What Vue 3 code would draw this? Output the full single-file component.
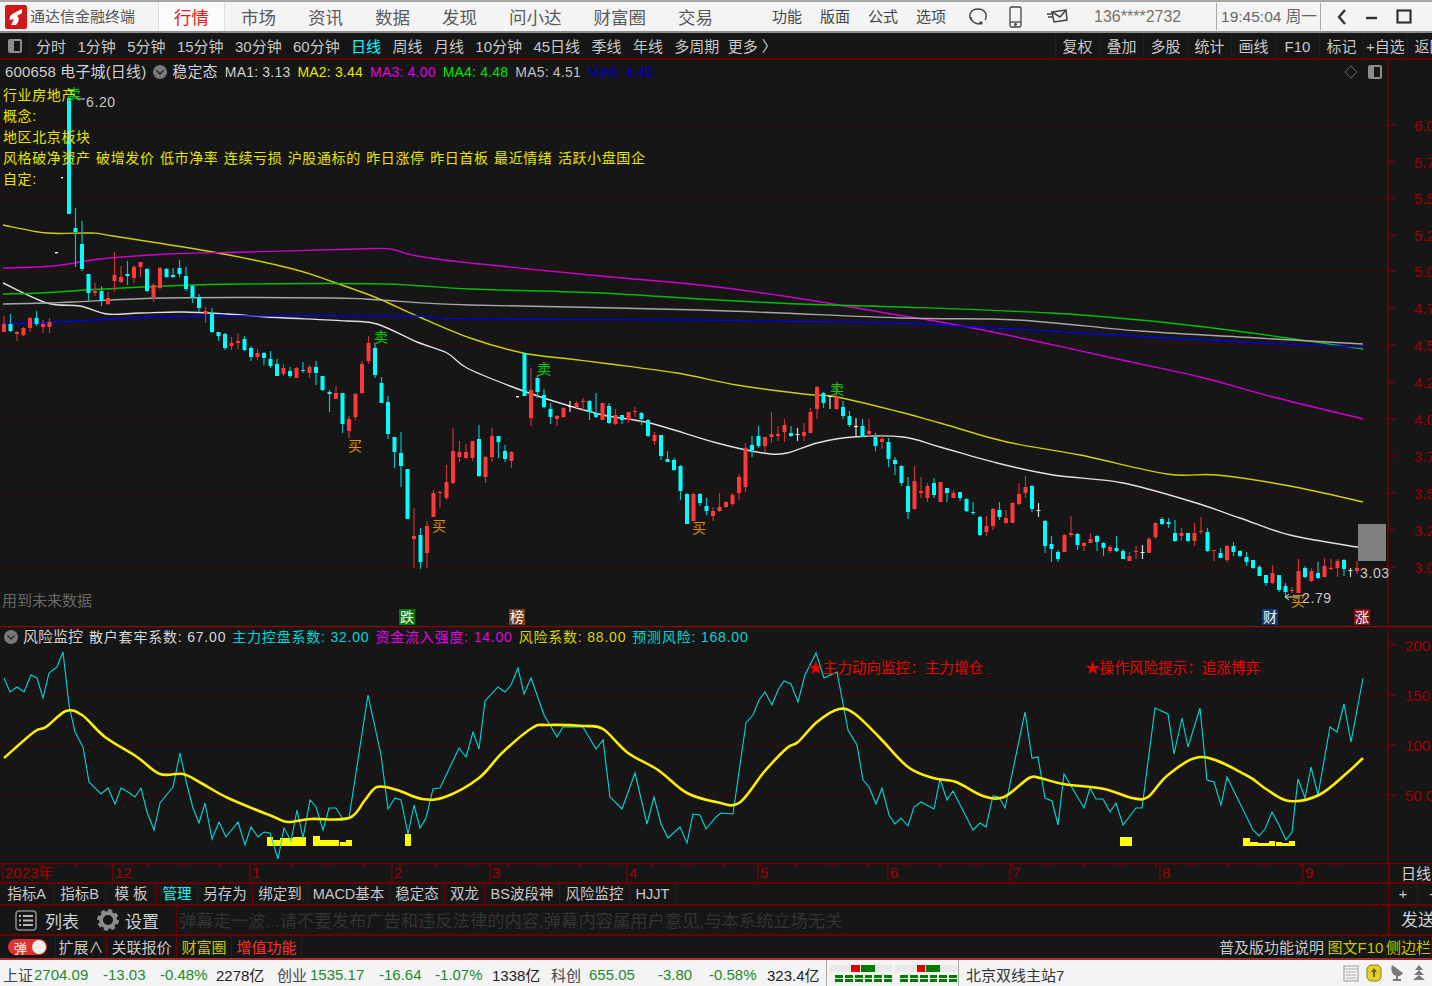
<template>
  <div class="app">
    <!-- 顶部标题栏 -->
    <header class="titlebar">
      <svg class="logo" width="22" height="24" viewBox="0 0 22 24">
        <rect x="0" y="0" width="22" height="24" rx="2" fill="#d01818" />
        <path d="M17 4 L9 8 C5 10 4 13 5 15 L9 14 L6 20 L11 20 C14 17 15 13 12 11 L17 8 Z" fill="#fff" />
      </svg>
      <span class="app-name">通达信金融终端</span>
      <nav class="topnav">
        <a v-for="item in topNav" :key="item" class="topnav-item" :class="{ active: item === '行情' }">{{ item }}</a>
      </nav>
      <div class="topmenu">
        <span v-for="item in topMenu" :key="item">{{ item }}</span>
      </div>
      <svg class="ticon headset" width="20" height="22" viewBox="0 0 20 22" fill="none" stroke="#444" stroke-width="1.4">
        <path d="M3 14 C0 9 3 3 10 3 C17 3 20 9 17 14" />
        <path d="M3 11 C3 15 6 17 10 18 L13 17" />
        <circle cx="13" cy="17" r="1" fill="#444" />
      </svg>
      <svg class="ticon phone" width="13" height="22" viewBox="0 0 13 22" fill="none" stroke="#444" stroke-width="1.3">
        <rect x="1" y="1" width="11" height="20" rx="1.5" />
        <path d="M1 16 H12" />
        <circle cx="6.5" cy="18.5" r=".8" fill="#444" />
      </svg>
      <svg class="ticon mail" width="21" height="15" viewBox="0 0 21 15" fill="none" stroke="#444" stroke-width="1.5">
        <path d="M5 3 L19 1 L20 11 L7 13 Z" />
        <path d="M5 3 L13 8 L19 1" />
        <path d="M0 5 H5 M1 8 H6" />
      </svg>
      <span class="account">136****2732</span>
      <i class="tsep"></i>
      <span class="clock">19:45:04 周一</span>
      <i class="tsep"></i>
      <svg class="wbtn back" width="12" height="18" viewBox="0 0 12 18" fill="none" stroke="#333" stroke-width="2.4"><path d="M9 2 L3 9 L9 16" /></svg>
      <svg class="wbtn min" width="12" height="18" viewBox="0 0 12 18" fill="none" stroke="#333" stroke-width="2.4"><path d="M0 10 H11" /></svg>
      <svg class="wbtn max" width="16" height="16" viewBox="0 0 16 16" fill="none" stroke="#333" stroke-width="2.2"><rect x="1.5" y="1.5" width="13" height="12" /></svg>
    </header>

    <!-- 周期工具栏 -->
    <div class="toolbar">
      <div class="tool-icon"><i class="panel-icon"></i></div>
      <div class="periods">
        <span v-for="p in periods" :key="p" :class="{ on: p === '日线' }">{{ p }}</span>
        <span class="more">更多 〉</span>
      </div>
      <div class="tools">
        <span v-for="t in tools" :key="t">{{ t }}</span>
      </div>
    </div>

    <!-- K线主图 -->
    <section class="main-chart">
      <svg class="chart-svg" width="1432" height="566" viewBox="0 60 1432 566">
        <line v-for="y in mainGrid" :key="y" x1="0" x2="1388" :y1="y" :y2="y" class="grid" />
        <path v-for="m in maLines" :key="m.color" :d="smooth(m.points)" :stroke="m.color" fill="none" stroke-width="1.4" />
        <g v-for="c in candleList" :key="c.x">
          <line :x1="c.x" :x2="c.x" :y1="c.hi" :y2="c.lo" :stroke="c.wick" stroke-width="1.2" />
          <rect v-if="c.h" :x="c.x - 2" :y="c.top" width="4" :height="c.h" :fill="c.color" />
        </g>
        <rect x="55" y="252" width="3" height="1.4" fill="#eee" />
        <rect x="61" y="177" width="2" height="1.4" fill="#eee" />
        <rect x="516" y="396" width="3" height="1.4" fill="#eee" />
        <rect x="1358" y="524" width="28" height="37" fill="#808080" />
        <line x1="1388" x2="1388" y1="60" y2="626" class="axis" />
        <g v-for="t in mainTicks" :key="t.label">
          <line x1="1388" x2="1396" :y1="t.y" :y2="t.y" class="axis" />
          <text x="1414" :y="t.y + 6" class="axis-text">{{ t.label }}</text>
        </g>
        <path d="M73 95 L79 99 L85 99" stroke="#ddd" fill="none" />
        <text x="86" y="107" class="price">6.20</text>
        <path d="M1300 597 H1285 L1289 594 M1285 597 L1289 600" stroke="#ddd" fill="none" />
        <text x="1302" y="603" class="price">2.79</text>
        <text x="1360" y="578" class="price">3.03</text>
        <text v-for="s in signals" :key="s.x" :x="s.x" :y="s.y" class="signal" :fill="s.color">{{ s.text }}</text>
        <text x="2" y="606" class="future">用到未来数据</text>
        <g v-for="b in badges" :key="b.text">
          <rect :x="b.x" y="609" width="16" height="16" :fill="b.color" />
          <text :x="b.x + 1" y="622" class="badge-text">{{ b.text }}</text>
        </g>
      </svg>
      <div class="legend">
        <span class="stock">600658 电子城(日线)</span>
        <svg class="fold" width="14" height="14" viewBox="0 0 14 14">
          <circle cx="7" cy="7" r="7" fill="#7a7a7a" />
          <path d="M3.5 5.5 L7 9 L10.5 5.5" fill="none" stroke="#262626" stroke-width="1.4" />
        </svg>
        <span class="stock ind">稳定态</span>
        <span v-for="m in maLegend" :key="m.text" :style="{ color: m.color }">{{ m.text }}</span>
      </div>
      <div class="tags">
        <div>行业房地产</div>
        <div>概念:</div>
        <div>地区北京板块</div>
        <div class="wide">风格破净资产 破增发价 低市净率 连续亏损 沪股通标的 昨日涨停 昨日首板 最近情绪 活跃小盘国企</div>
        <div>自定:</div>
      </div>
      <div class="corner">
        <svg width="14" height="14" viewBox="0 0 14 14" fill="none" stroke="#666"><path d="M7 1 L13 7 L7 13 L1 7 Z" /></svg>
        <i class="panel-icon small"></i>
      </div>
    </section>

    <!-- 副图 风险监控 -->
    <section class="sub-chart">
      <svg class="chart-svg" width="1432" height="237" viewBox="0 626 1432 237">
        <line x1="0" x2="1432" y1="626.5" y2="626.5" class="axis bright" />
        <line v-for="t in subGrid" :key="t" x1="0" x2="1388" :y1="t" :y2="t" class="grid" />
        <rect v-for="(b, i) in riskBars" :key="i" :x="b[0]" :y="b[2]" :width="b[1] - b[0]" :height="846 - b[2]" fill="#ffff00" />
        <polyline :points="riskLine" fill="none" stroke="#00d8d8" stroke-width="1.1" />
        <path :d="smooth(riskAvg)" fill="none" stroke="#ffee00" stroke-width="2.6" />
        <text x="808" y="673" class="red-note">★主力动向监控：主力增仓</text>
        <text x="1085" y="673" class="red-note">★操作风险提示：追涨博弈</text>
        <line x1="1388" x2="1388" y1="626" y2="863" class="axis" />
        <g v-for="t in subTicks" :key="t.label">
          <line x1="1388" x2="1396" :y1="t.y" :y2="t.y" class="axis" />
          <text x="1405" :y="t.y + 6" class="axis-text">{{ t.label }}</text>
        </g>
      </svg>
      <div class="legend sub">
        <svg class="fold" width="14" height="14" viewBox="0 0 14 14">
          <circle cx="7" cy="7" r="7" fill="#7a7a7a" />
          <path d="M3.5 5.5 L7 9 L10.5 5.5" fill="none" stroke="#262626" stroke-width="1.4" />
        </svg>
        <span class="stock name">风险监控</span>
        <span v-for="m in riskLegend" :key="m.text" :style="{ color: m.color }">{{ m.text }}</span>
      </div>
    </section>

    <!-- 时间轴 -->
    <div class="date-axis">
      <svg class="chart-svg" width="1388" height="19" viewBox="0 863 1388 19">
        <line x1="0" x2="1388" y1="863.5" y2="863.5" class="axis" />
        <line v-for="x in dateTicks" :key="x" :x1="x" :x2="x" y1="863" y2="867" class="axis" />
        <g v-for="d in dates" :key="d.label">
          <line :x1="d.x" :x2="d.x" y1="863" y2="882" class="axis" />
          <text :x="d.x + 2" y="878" class="date-text">{{ d.label }}</text>
        </g>
      </svg>
      <div class="date-unit">日线</div>
    </div>

    <!-- 指标标签 -->
    <div class="tabs">
      <span v-for="t in tabs" :key="t.text" :class="{ on: t.text === '管理' }" :style="{ width: t.w + 'px' }">{{ t.text }}</span>
      <i class="fill"></i>
      <span class="pm">+</span>
      <span class="pm last">-</span>
    </div>

    <!-- 弹幕输入 -->
    <div class="danmu">
      <div class="danmu-tools">
        <svg width="22" height="21" viewBox="0 0 22 21">
          <rect x="1" y="1" width="20" height="19" rx="3" fill="none" stroke="#8a8a8a" stroke-width="1.6" />
          <path d="M4 6 H6 M8 6 H18 M4 10.5 H6 M8 10.5 H18 M4 15 H6 M8 15 H18" stroke="#b8b8b8" stroke-width="2" />
        </svg>
        <span class="list-label">列表</span>
        <svg class="gear" width="22" height="22" viewBox="0 0 22 22">
          <circle cx="11" cy="11" r="7" fill="none" stroke="#8c8c8c" stroke-width="4" />
          <circle cx="11" cy="11" r="9.2" fill="none" stroke="#8c8c8c" stroke-width="3.4" stroke-dasharray="4 3.2" />
        </svg>
        <span>设置</span>
      </div>
      <div class="danmu-input">弹幕走一波...请不要发布广告和违反法律的内容,弹幕内容属用户意见,与本系统立场无关</div>
      <div class="send">发送</div>
    </div>

    <!-- 功能条 -->
    <div class="strip">
      <div class="toggle-cell">
        <div class="toggle"><b>弹</b><i></i></div>
      </div>
      <span class="w51">扩展∧</span>
      <span class="w70">关联报价</span>
      <span class="w55 yellow">财富圈</span>
      <span class="w70 red">增值功能</span>
      <i class="fill"></i>
      <span class="w109">普及版功能说明</span>
      <span class="w60 yellow">图文F10</span>
      <span class="w46 yellow">侧边栏</span>
    </div>

    <!-- 状态栏 -->
    <footer class="statusbar">
      <template v-for="g in indices" :key="g.name">
        <span class="idx-name" :style="{ width: g.nameW + 'px' }">{{ g.name }}</span>
        <span v-for="v in g.vals" :key="v.t" :class="v.c" :style="{ width: v.w + 'px' }">{{ v.t }}</span>
      </template>
      <i class="ssep"></i>
      <div v-for="(m, i) in meters" :key="i" class="meter">
        <div class="meter-top">
          <i v-for="(s, j) in m" :key="j" :class="s.c" :style="{ width: s.w + 'px' }"></i>
        </div>
        <div class="meter-dash">
          <i v-for="n in 12" :key="n"></i>
        </div>
      </div>
      <i class="ssep"></i>
      <span class="station">北京双线主站7</span>
      <div class="status-icons">
        <svg width="16" height="17" viewBox="0 0 16 17">
          <rect x="1" y="1" width="14" height="15" fill="#f4f4f4" stroke="#999" />
          <path d="M1 4 H15 M3 7 H13 M3 10 H13 M3 13 H13" stroke="#aaa" />
        </svg>
        <svg width="16" height="18" viewBox="0 0 16 18">
          <path d="M4 1 H12 L15 4 V14 L12 17 H4 L1 14 V4 Z" fill="#e4d020" stroke="#8c8030" />
          <path d="M8 4 L11 8 H9 V13 H7 V8 H5 Z" fill="#6c6420" />
        </svg>
        <svg width="16" height="18" viewBox="0 0 16 18">
          <path d="M3 1 L14 9 C12 13 7 13 4 10 C2 7 2 4 3 1 Z" fill="#777" />
          <path d="M8 11 V15 M4 16 H12" stroke="#777" stroke-width="2" />
        </svg>
        <svg width="14" height="18" viewBox="0 0 14 18" fill="#777">
          <path d="M7 1 L11 6 H3 Z M7 6 L12 11 H2 Z M7 11 L13 16 H1 Z" />
        </svg>
      </div>
    </footer>
  </div>
</template>

<script setup>
import { computed } from "vue";

const topNav = ["行情", "市场", "资讯", "数据", "发现", "问小达", "财富圈", "交易"];
const topMenu = ["功能", "版面", "公式", "选项"];
const periods = ["分时", "1分钟", "5分钟", "15分钟", "30分钟", "60分钟", "日线", "周线", "月线", "10分钟", "45日线", "季线", "年线", "多周期"];
const tools = ["复权", "叠加", "多股", "统计", "画线", "F10", "标记", "+自选", "返回"];

const mainGrid = [125, 198, 271, 345, 419, 493, 567];
const mainTicks = [
  { y: 125, label: "6.00" }, { y: 162, label: "5.75" }, { y: 198, label: "5.50" }, { y: 235, label: "5.25" },
  { y: 271, label: "5.00" }, { y: 308, label: "4.75" }, { y: 345, label: "4.50" }, { y: 382, label: "4.25" },
  { y: 419, label: "4.00" }, { y: 456, label: "3.75" }, { y: 493, label: "3.50" }, { y: 530, label: "3.25" },
  { y: 567, label: "3.00" },
];

const maLegend = [
  { text: "MA1: 3.13", color: "#d0d0d0" },
  { text: "MA2: 3.44", color: "#e6e600" },
  { text: "MA3: 4.00", color: "#e600e6" },
  { text: "MA4: 4.48", color: "#00e600" },
  { text: "MA5: 4.51", color: "#c0c0c0" },
  { text: "MA6: 4.49", color: "#0000c8" },
];

const maLines = [
  { color: "#e0e0e0", points: "3,283 47,303 80,306 107,314 140,313 183,312 227,314 267,317 347,321 377,324 417,342 447,353 467,368 510,386 550,400 603,415 650,423 717,443 763,453 787,453 817,443 853,437 903,437 940,447 997,463 1053,475 1123,483 1193,502 1240,518 1290,535 1363,548" },
  { color: "#d0d000", points: "3,225 47,233 92,233 113,236 213,252 293,269 333,282 377,298 417,316 470,338 523,353 570,359 610,364 677,373 737,385 803,394 837,397 900,412 940,423 1007,442 1080,455 1167,474 1217,475 1290,486 1363,502" },
  { color: "#d000d0", points: "3,268 53,266 100,259 167,254 248,252 358,249 390,249 417,256 470,263 600,276 700,285 790,297 880,312 957,325 1040,342 1117,359 1200,377 1273,397 1363,419" },
  { color: "#00c000", points: "3,294 40,293 87,290 167,286 240,284 383,284 470,289 600,293 700,299 800,304 900,307 1050,313 1140,320 1213,328 1287,338 1363,349" },
  { color: "#a8a8a8", points: "3,304 47,303 73,302 167,298 333,298 380,300 470,305 700,310 900,318 1017,320 1140,331 1257,338 1363,344" },
  { color: "#0000e0", points: "3,324 60,322 133,318 213,316 413,316 470,319 697,320 847,322 940,325 1100,334 1257,343 1363,347" },
];

// 把折点串转成平滑曲线
function smooth(points) {
  const p = points.split(" ").map((s) => s.split(",").map(Number));
  let d = `M${p[0][0]} ${p[0][1]}`;
  for (let i = 0; i < p.length - 1; i++) {
    const a = p[i - 1] || p[i];
    const b = p[i];
    const c = p[i + 1];
    const e = p[i + 2] || c;
    const c1x = b[0] + (c[0] - a[0]) / 6;
    const c1y = b[1] + (c[1] - a[1]) / 6;
    const c2x = c[0] - (e[0] - b[0]) / 6;
    const c2y = c[1] - (e[1] - b[1]) / 6;
    d += ` C${c1x.toFixed(1)} ${c1y.toFixed(1)} ${c2x.toFixed(1)} ${c2y.toFixed(1)} ${c[0]} ${c[1]}`;
  }
  return d;
}

// 每根K线：类型、最高、实体上沿、实体下沿、最低（像素坐标）
const rawCandles = [
  ["r",316,324,332,332],["c",314,324,331,332],["r",331,332,334,341],["r",327,328,335,336],["r",317,318,328,332],
  ["c",311,318,324,326],["r",320,324,327,333],["r",318,322,327,333],null,null,
  ["c",96,98,214,214],["c",208,228,232,267],["c",221,244,269,271],["c",274,274,293,301],["r",283,291,293,296],
  ["c",286,291,301,306],["r",292,298,304,305],["r",252,275,281,292],["r",266,277,282,283],["c",261,274,276,285],
  ["r",265,267,278,283],["r",262,262,267,277],["c",268,269,291,292],["r",283,285,297,302],["r",267,268,288,289],
  ["c",268,269,277,278],["c",268,275,277,278],["c",260,268,274,277],["c",267,276,289,291],["c",285,286,297,303],
  ["c",294,297,308,312],["r",307,311,314,323],["c",308,313,332,333],["c",332,332,336,341],["c",333,334,348,350],
  ["r",337,343,346,350],["r",333,341,343,349],["c",336,339,350,351],["c",346,348,357,361],["r",349,353,357,360],
  ["c",352,353,358,365],["c",351,359,366,368],["c",359,364,376,376],["r",364,368,374,376],["c",367,371,376,378],
  ["r",367,368,378,378],["c",362,370,371,373],["r",365,367,373,378],["c",361,367,373,385],["c",376,376,390,391],
  ["c",390,392,394,412],["r",386,393,399,399],["c",393,393,424,433],["r",416,419,431,438],["r",393,394,417,420],
  ["r",361,364,393,394],["r",336,343,361,364],["c",343,348,375,378],["c",377,383,403,403],["c",396,402,434,439],
  ["c",437,437,452,468],["c",432,453,466,487],["c",469,469,519,519],["r",508,536,539,568],["c",528,535,562,569],
  ["r",521,526,553,568],["r",490,493,517,517],["r",491,492,493,508],["r",465,482,498,500],["r",428,451,483,484],
  ["r",441,452,457,462],["r",444,452,458,459],["r",441,441,458,461],["c",425,439,476,477],["r",456,457,477,483],
  ["r",428,436,457,462],["c",436,436,442,458],["c",445,451,459,462],["r",451,452,461,468],null,
  ["c",353,353,396,396],["r",368,390,418,426],["c",375,378,392,398],["c",389,395,407,408],["c",403,409,417,424],
  ["r",415,416,419,426],["r",407,408,417,418],["w",401,406,407,412],["r",401,403,407,408],["r",398,401,402,410],
  ["c",400,401,412,420],["c",393,413,417,418],["r",403,403,420,420],["c",403,406,423,424],["r",409,415,424,425],
  ["c",415,415,420,424],["r",412,412,420,423],["r",407,411,412,417],["c",412,413,419,425],["c",419,420,436,437],
  ["r",432,435,441,445],["c",435,435,456,460],["c",451,459,462,462],["c",458,460,470,471],["c",465,466,491,500],
  ["c",493,494,524,524],["r",493,494,521,521],["c",493,494,503,506],["c",498,506,511,515],["r",507,511,516,521],
  ["r",493,507,511,512],["r",501,502,507,508],["r",493,495,504,506],["r",474,477,493,500],["r",443,448,487,492],
  ["c",436,445,450,457],["c",426,436,446,448],["r",437,437,446,452],["r",412,434,437,443],["r",426,434,436,441],
  ["r",419,425,432,442],["c",426,433,436,437],["w",428,434,435,441],["r",423,432,436,441],["r",408,412,433,433],
  ["r",386,387,409,419],["c",392,393,403,408],["w",395,396,396,409],["r",387,397,409,410],["c",401,407,416,419],
  ["c",411,416,425,427],["w",418,426,427,437],["c",419,426,437,437],["r",419,431,434,437],["c",433,437,446,451],
  ["r",434,439,442,449],["c",438,442,459,467],["c",457,460,464,475],["c",465,466,483,486],["c",477,486,512,519],
  ["r",466,481,509,510],["r",477,491,493,498],["r",483,486,498,502],["c",478,483,495,498],["r",482,482,502,502],
  ["c",488,488,493,502],["r",490,493,498,498],["c",492,492,498,501],["c",498,499,511,512],["c",502,512,513,515],
  ["c",516,517,535,536],["r",516,526,532,536],["r",508,509,526,530],["c",502,510,517,520],["r",510,518,523,524],
  ["r",502,503,523,523],["r",483,494,504,505],["r",476,487,493,498],["c",485,486,509,512],["w",503,510,511,517],
  ["c",520,521,546,553],["c",536,544,549,562],["c",550,552,559,562],["r",534,535,552,552],["r",516,533,535,537],
  ["c",533,534,545,550],["r",542,543,546,551],["r",533,539,543,543],["c",535,536,542,551],["c",542,543,548,556],
  ["r",545,547,551,553],["c",536,548,551,552],["c",549,551,559,559],["r",552,556,561,561],["r",546,551,552,559],
  ["w",545,552,553,559],["r",537,539,553,553],["r",522,523,537,539],["c",517,519,524,525],["c",518,522,524,528],
  ["c",520,533,541,542],["r",528,533,536,541],["c",533,533,541,542],["r",523,533,541,546],["r",517,531,532,534],
  ["c",528,532,551,552],["r",550,550,551,561],["c",548,553,558,558],["r",545,546,560,562],["c",542,546,552,556],
  ["c",550,551,556,557],["c",552,557,562,566],["c",560,560,568,569],["c",565,567,576,576],["c",575,575,583,586],
  ["r",565,573,583,584],["c",575,575,590,592],["c",583,586,592,597],["r",587,590,591,593],["r",559,571,593,593],
  ["c",566,568,577,578],["r",568,571,581,582],["c",562,573,578,579],["r",558,566,577,577],["r",559,568,569,570],
  ["r",559,561,568,577],["c",559,560,569,576],["w",568,570,571,577],["r",561,568,571,574],
];

const candleList = computed(() =>
  rawCandles
    .map((c, i) => {
      if (!c) return null;
      const [type, hi, top, bot, lo] = c;
      const colors = {
        r: { color: "#ff3838", wick: "#d03030" },
        c: { color: "#00ffff", wick: "#00c4c4" },
        w: { color: "#eeeeee", wick: "#dddddd" },
      };
      return {
        x: Math.round((4 + 6.505 * i) * 2) / 2,
        hi,
        lo,
        top,
        h: Math.max(bot - top, 1),
        ...colors[type],
      };
    })
    .filter(Boolean)
);

const signals = [
  { x: 67, y: 99, text: "卖", color: "#00d000" },
  { x: 374, y: 342, text: "卖", color: "#00d000" },
  { x: 537, y: 374, text: "卖", color: "#00d000" },
  { x: 830, y: 394, text: "卖", color: "#00d000" },
  { x: 348, y: 451, text: "买", color: "#e09000" },
  { x: 432, y: 531, text: "买", color: "#e09000" },
  { x: 692, y: 533, text: "买", color: "#e09000" },
  { x: 1291, y: 606, text: "买", color: "#e09000" },
];

const badges = [
  { x: 399, text: "跌", color: "#007a00" },
  { x: 509, text: "榜", color: "#7a4010" },
  { x: 1262, text: "财", color: "#0a3e78" },
  { x: 1354, text: "涨", color: "#8b1010" },
];

const subGrid = [695, 745, 795];
const subTicks = [
  { y: 645, label: "200.0" },
  { y: 695, label: "150.0" },
  { y: 745, label: "100.0" },
  { y: 795, label: "50.00" },
];

const riskLegend = [
  { text: "散户套牢系数: 67.00", color: "#d8d8d8" },
  { text: "主力控盘系数: 32.00", color: "#00d8d8" },
  { text: "资金流入强度: 14.00", color: "#e600e6" },
  { text: "风险系数: 88.00", color: "#d8d800" },
  { text: "预测风险: 168.00", color: "#00d8d8" },
];

const riskLine =
  "4,678 10,692 17,687 24,692 31,675 37,678 43,698 49,673 57,667 63,652 69,705 75,732 83,747 89,782 101,794 108,788 115,804 121,788 128,792 135,797 141,788 147,812 154,830 160,803 173,787 180,753 187,785 193,808 199,823 205,803 212,839 219,822 226,837 238,822 245,845 251,827 258,837 264,832 270,833 278,859 284,828 291,841 297,810 303,838 310,800 316,807 323,830 329,808 336,808 342,818 349,818 368,695 381,755 388,809 395,798 401,800 408,834 414,805 420,828 426,818 433,789 440,788 459,748 466,757 473,732 479,749 485,701 498,687 505,692 511,685 518,668 524,694 531,678 537,695 544,715 550,725 557,737 563,727 583,727 596,749 603,740 610,797 622,809 635,773 647,824 654,797 661,824 668,838 680,827 687,843 693,814 700,815 706,829 716,817 " +
  "721,813 733,814 746,723 753,715 759,700 765,692 772,705 778,690 784,681 791,684 798,702 805,675 816,653 824,678 837,672 848,730 857,745 863,780 869,787 876,804 882,788 889,815 895,824 901,818 908,826 914,807 921,802 934,809 940,779 947,800 953,791 973,830 980,823 986,827 993,796 999,797 1005,808 1025,712 1032,758 1038,757 1045,798 1052,801 1058,825 1064,774 1084,808 1090,788 1096,799 1103,799 1110,812 1116,803 1123,825 1136,808 1142,808 1155,708 1168,714 1174,754 1182,718 1188,747 1200,708 1207,780 1214,782 1221,805 1227,777 1253,830 1259,836 1265,829 1272,812 1279,825 1286,840 1292,832 1298,779 1305,798 1311,767 1318,795 1330,727 1337,732 1344,704 1351,742 1363,678";

const riskAvg =
  "4,758 34,732 46,727 66,711 82,715 105,737 137,757 160,774 183,774 201,783 228,798 274,817 288,822 311,819 349,818 365,800 377,787 397,790 422,799 445,797 479,778 502,753 532,728 548,725 584,726 603,729 628,753 658,770 687,793 716,802 739,803 764,772 787,748 798,742 817,722 839,709 855,714 880,738 908,767 933,778 956,782 983,796 1004,797 1029,778 1040,778 1063,784 1104,789 1132,798 1148,797 1168,775 1202,757 1246,775 1266,789 1289,801 1319,795 1348,772 1363,758";

// 底部黄色柱：起点、终点、顶部
const riskBars = [
  [267, 273, 837], [273, 280, 840], [280, 293, 838], [293, 306, 837],
  [313, 320, 836], [320, 339, 840], [340, 346, 842], [346, 352, 840],
  [405, 411, 834], [1120, 1132, 837],
  [1243, 1250, 838], [1250, 1258, 842], [1258, 1269, 843], [1269, 1275, 841],
  [1276, 1282, 842], [1282, 1289, 843], [1289, 1295, 841],
];

const dates = [
  { x: 3, label: "2023年" }, { x: 113, label: "12" }, { x: 250, label: "1" }, { x: 392, label: "2" },
  { x: 490, label: "3" }, { x: 627, label: "4" }, { x: 758, label: "5" }, { x: 888, label: "6" },
  { x: 1010, label: "7" }, { x: 1160, label: "8" }, { x: 1303, label: "9" },
];
const dateTicks = Array.from({ length: 37 }, (_, i) => 40 + i * 36);

const tabs = [
  { text: "指标A", w: 54 }, { text: "指标B", w: 52 }, { text: "模 板", w: 51 }, { text: "管理", w: 41 },
  { text: "另存为", w: 55 }, { text: "绑定到", w: 55 }, { text: "MACD基本", w: 82 }, { text: "稳定态", w: 55 },
  { text: "双龙", w: 40 }, { text: "BS波段神", w: 75 }, { text: "风险监控", w: 70 }, { text: "HJJT", w: 46 },
];

const indices = [
  {
    name: "上证", nameW: 31,
    vals: [
      { t: "2704.09", c: "green", w: 69 }, { t: "-13.03", c: "green", w: 57 },
      { t: "-0.48%", c: "green", w: 56 }, { t: "2278亿", c: "dark", w: 61 },
    ],
  },
  {
    name: "创业", nameW: 33,
    vals: [
      { t: "1535.17", c: "green", w: 69 }, { t: "-16.64", c: "green", w: 56 },
      { t: "-1.07%", c: "green", w: 57 }, { t: "1338亿", c: "dark", w: 59 },
    ],
  },
  {
    name: "科创", nameW: 38,
    vals: [
      { t: "655.05", c: "green", w: 69 }, { t: "-3.80", c: "green", w: 51 },
      { t: "-0.58%", c: "green", w: 58 }, { t: "323.4亿", c: "dark", w: 58 },
    ],
  },
];

const meters = [
  [{ c: "g", w: 21 }, { c: "r", w: 9 }, { c: "n", w: 1 }, { c: "d", w: 14 }, { c: "g", w: 17 }],
  [{ c: "g", w: 22 }, { c: "r", w: 8 }, { c: "n", w: 1 }, { c: "d", w: 14 }, { c: "g", w: 17 }],
];
</script>

<style>
html,
body {
  margin: 0;
  overflow: hidden;
  background: #161616;
}
</style>

<style scoped>
.app {
  width: 1432px;
  height: 986px;
  overflow: hidden;
  display: flex;
  flex-direction: column;
  background: #161616;
  color: #d0d0d0;
  font-family: "Liberation Sans", "Noto Sans CJK SC", sans-serif;
  font-size: 15px;
}

/* 标题栏 */
.titlebar {
  height: 33px;
  flex: none;
  box-sizing: border-box;
  display: flex;
  align-items: center;
  background: #f4f4f4;
  border-top: 2px solid #a8a8a8;
  border-bottom: 2px solid #8c8c8c;
  color: #555;
  white-space: nowrap;
  overflow: hidden;
  line-height: 31px;
}
.logo {
  margin-left: 5px;
  flex: none;
}
.app-name {
  margin-left: 3px;
  font-size: 15px;
  width: 128px;
  flex: none;
}
.topnav {
  display: flex;
  height: 100%;
  flex: none;
}
.topnav-item {
  padding: 0 16px;
  font-size: 17.5px;
  line-height: 33px;
  color: #5a5a5a;
}
.topnav-item.active {
  color: #e81818;
  background: #fbfbfb;
  box-sizing: border-box;
  box-shadow: inset 1px 0 #ddd, inset -1px 0 #ddd;
}
.topmenu {
  display: flex;
  gap: 18px;
  margin-left: 43px;
  color: #444;
  flex: none;
}
.ticon {
  flex: none;
}
.headset {
  margin-left: 22px;
}
.phone {
  margin-left: 21px;
}
.mail {
  margin-left: 25px;
}
.account {
  margin-left: 26px;
  width: 122px;
  flex: none;
  color: #7a7268;
  font-size: 16px;
}
.tsep {
  width: 1px;
  height: 27px;
  background: #aaa;
  flex: none;
}
.clock {
  width: 103px;
  padding-left: 4px;
  box-sizing: border-box;
  flex: none;
  color: #666;
  font-size: 15.5px;
}
.wbtn {
  flex: none;
}
.back {
  margin-left: 15px;
}
.min {
  margin-left: 18px;
}
.max {
  margin-left: 18px;
}

/* 工具栏 */
.toolbar {
  height: 27px;
  flex: none;
  box-sizing: border-box;
  display: flex;
  align-items: center;
  border-bottom: 2px solid #6a0000;
  white-space: nowrap;
}
.tool-icon {
  width: 30px;
  height: 100%;
  box-sizing: border-box;
  flex: none;
  display: flex;
  align-items: center;
  justify-content: center;
  border-right: 1px solid #6a0000;
}
.panel-icon {
  display: block;
  width: 14px;
  height: 14px;
  box-sizing: border-box;
  border: 2px solid #8c8c8c;
  border-left-width: 6px;
  border-radius: 2px;
}
.panel-icon.small {
  width: 14px;
  height: 14px;
}
.periods {
  display: flex;
  gap: 11.4px;
  margin-left: 6px;
  color: #c8c8c8;
  flex: none;
  width: 1019px;
}
.periods .on {
  color: #00ffff;
}
.more {
  margin-left: -3px;
}
.tools {
  display: flex;
  flex: none;
}
.tools span {
  width: 44px;
  height: 25px;
  line-height: 27px;
  box-sizing: border-box;
  border-left: 1px solid #6a0000;
  text-align: center;
  color: #c8c8c8;
  flex: none;
}

/* 主图 */
.main-chart,
.sub-chart {
  position: relative;
  flex: none;
}
.main-chart {
  height: 566px;
}
.sub-chart {
  height: 237px;
}
.chart-svg {
  display: block;
}
.grid {
  stroke: #6a0000;
  stroke-width: 1;
  stroke-dasharray: 1 3;
}
.axis {
  stroke: #760000;
  stroke-width: 1.4;
}
.axis.bright {
  stroke: #900000;
}
.axis-text {
  fill: #a00000;
  font-size: 15px;
}
.price {
  fill: #c8c8c8;
  font-size: 14px;
  letter-spacing: 0.6px;
}
.signal {
  font-size: 14px;
}
.future {
  fill: #666;
  font-size: 15px;
}
.badge-text {
  fill: #fff;
  font-size: 14px;
}
.legend {
  position: absolute;
  left: 5px;
  top: 2px;
  display: flex;
  align-items: center;
  gap: 7px;
  white-space: nowrap;
  font-size: 14px;
  letter-spacing: 0.2px;
  line-height: 20px;
}
.legend .stock {
  color: #d0d0d0;
  letter-spacing: 0.15px;
  font-size: 15px;
}
.legend .ind {
  margin-left: -2px;
}
.fold {
  flex: none;
  display: block;
}
.legend.sub {
  left: 4px;
  top: 1px;
  gap: 6px;
  letter-spacing: 0.8px;
}
.legend .name {
  margin-left: -1px;
  letter-spacing: 0;
}
.tags {
  position: absolute;
  left: 3px;
  top: 25px;
  color: #e6e600;
  font-size: 14px;
  letter-spacing: 0.6px;
  line-height: 21px;
  white-space: nowrap;
}
.tags .wide {
  word-spacing: 1px;
}
.corner {
  position: absolute;
  right: 50px;
  top: 5px;
  display: flex;
  gap: 10px;
  align-items: center;
}
.red-note {
  fill: #f00000;
  font-size: 14.6px;
}

/* 时间轴 */
.date-axis {
  height: 19px;
  flex: none;
  display: flex;
}
.date-text {
  fill: #a80000;
  font-size: 15px;
}
.date-unit {
  flex: 1;
  padding-left: 12px;
  line-height: 20px;
  border-left: 1px solid #760000;
  border-top: 1px solid #760000;
  box-sizing: border-box;
  white-space: nowrap;
  overflow: hidden;
}

/* 指标标签 */
.tabs {
  height: 22px;
  flex: none;
  box-sizing: border-box;
  display: flex;
  border-top: 2px solid #6a0000;
  white-space: nowrap;
  font-size: 14.5px;
  color: #c8c8c8;
}
.tabs span {
  flex: none;
  height: 100%;
  line-height: 21px;
  text-align: center;
  box-sizing: border-box;
  border-right: 1px solid #6a0000;
}
.tabs .on {
  color: #00ffff;
}
.fill {
  flex: 1;
}
.tabs .pm {
  width: 30px;
  border-left: 1px solid #6a0000;
}
.tabs .pm.last {
  width: 14px;
  border-left: 0;
  border-right: 0;
  padding-left: 11px;
  text-align: left;
  overflow: hidden;
}

/* 弹幕 */
.danmu {
  height: 32px;
  flex: none;
  box-sizing: border-box;
  display: flex;
  align-items: stretch;
  border-top: 2px solid #6a0000;
  border-bottom: 2px solid #6a0000;
  white-space: nowrap;
  font-size: 17px;
}
.danmu-tools {
  width: 177px;
  box-sizing: border-box;
  flex: none;
  display: flex;
  align-items: center;
  padding-left: 15px;
  border-right: 1px solid #6a0000;
  color: #c8d0d8;
}
.list-label {
  margin-left: 8px;
}
.gear {
  margin: 0 6px 0 18px;
}
.danmu-input {
  flex: 1;
  padding-left: 2px;
  line-height: 30px;
  color: #333;
  font-size: 17.3px;
}
.send {
  width: 44px;
  flex: none;
  box-sizing: border-box;
  padding-left: 12px;
  line-height: 30px;
  border-left: 1px solid #760000;
  overflow: hidden;
  color: #c8d0d8;
}

/* 功能条 */
.strip {
  height: 24px;
  flex: none;
  box-sizing: border-box;
  display: flex;
  border-bottom: 2px solid #a03030;
  white-space: nowrap;
  font-size: 15px;
  color: #c8c8c8;
}
.strip > span {
  flex: none;
  box-sizing: border-box;
  text-align: center;
  line-height: 23px;
  border-right: 1px solid #6a0000;
  overflow: hidden;
}
.toggle-cell {
  width: 56px;
  box-sizing: border-box;
  flex: none;
  padding: 3px 0 0 8px;
  border-right: 1px solid #6a0000;
}
.toggle {
  width: 39px;
  height: 16px;
  border-radius: 8px;
  background: #e03030;
  display: flex;
  align-items: center;
  justify-content: space-between;
  padding: 0 1px 0 6px;
  box-sizing: border-box;
}
.toggle b {
  font-size: 13px;
  font-weight: 400;
  color: #fff;
}
.toggle i {
  width: 14px;
  height: 14px;
  border-radius: 50%;
  background: #eee;
}
.w51 { width: 51px; }
.w70 { width: 70px; }
.w55 { width: 55px; }
.w109 { width: 109px; border-left: 1px solid #6a0000; }
.w60 { width: 60px; }
.w46 { width: 46px; }
.yellow { color: #c8c800; }
.red { color: #ff3030; }

/* 状态栏 */
.statusbar {
  height: 26px;
  flex: none;
  box-sizing: border-box;
  display: flex;
  align-items: center;
  padding-left: 3px;
  background: #f4f4f4;
  white-space: nowrap;
  overflow: hidden;
  font-size: 15px;
  color: #444;
}
.statusbar > span {
  flex: none;
  padding-top: 3px;
}
.idx-name {
  color: #444;
}
.green {
  color: #1a8a2a;
}
.dark {
  color: #222;
}
.ssep {
  width: 1px;
  height: 26px;
  background: #aaa;
  flex: none;
  margin-left: 1px;
}
.meter {
  width: 62px;
  flex: none;
  margin-left: 3px;
}
.meter-top {
  display: flex;
  height: 7px;
  background: #e8e8e8;
  margin-bottom: 3px;
}
.meter-top i {
  display: block;
  height: 7px;
}
.meter-top .r {
  background: #e00000;
}
.meter-top .g {
  background: transparent;
}
.meter-top .d {
  background: #007a00;
}
.meter-dash {
  display: grid;
  grid-template-columns: repeat(6, 1fr);
  gap: 1px 2px;
  padding-left: 5px;
}
.meter-dash i {
  height: 3px;
  background: #007a00;
}
.station {
  margin-left: 7px;
  width: 377px;
  color: #333;
}
.status-icons {
  display: flex;
  gap: 7px;
  align-items: center;
  flex: none;
}
</style>
